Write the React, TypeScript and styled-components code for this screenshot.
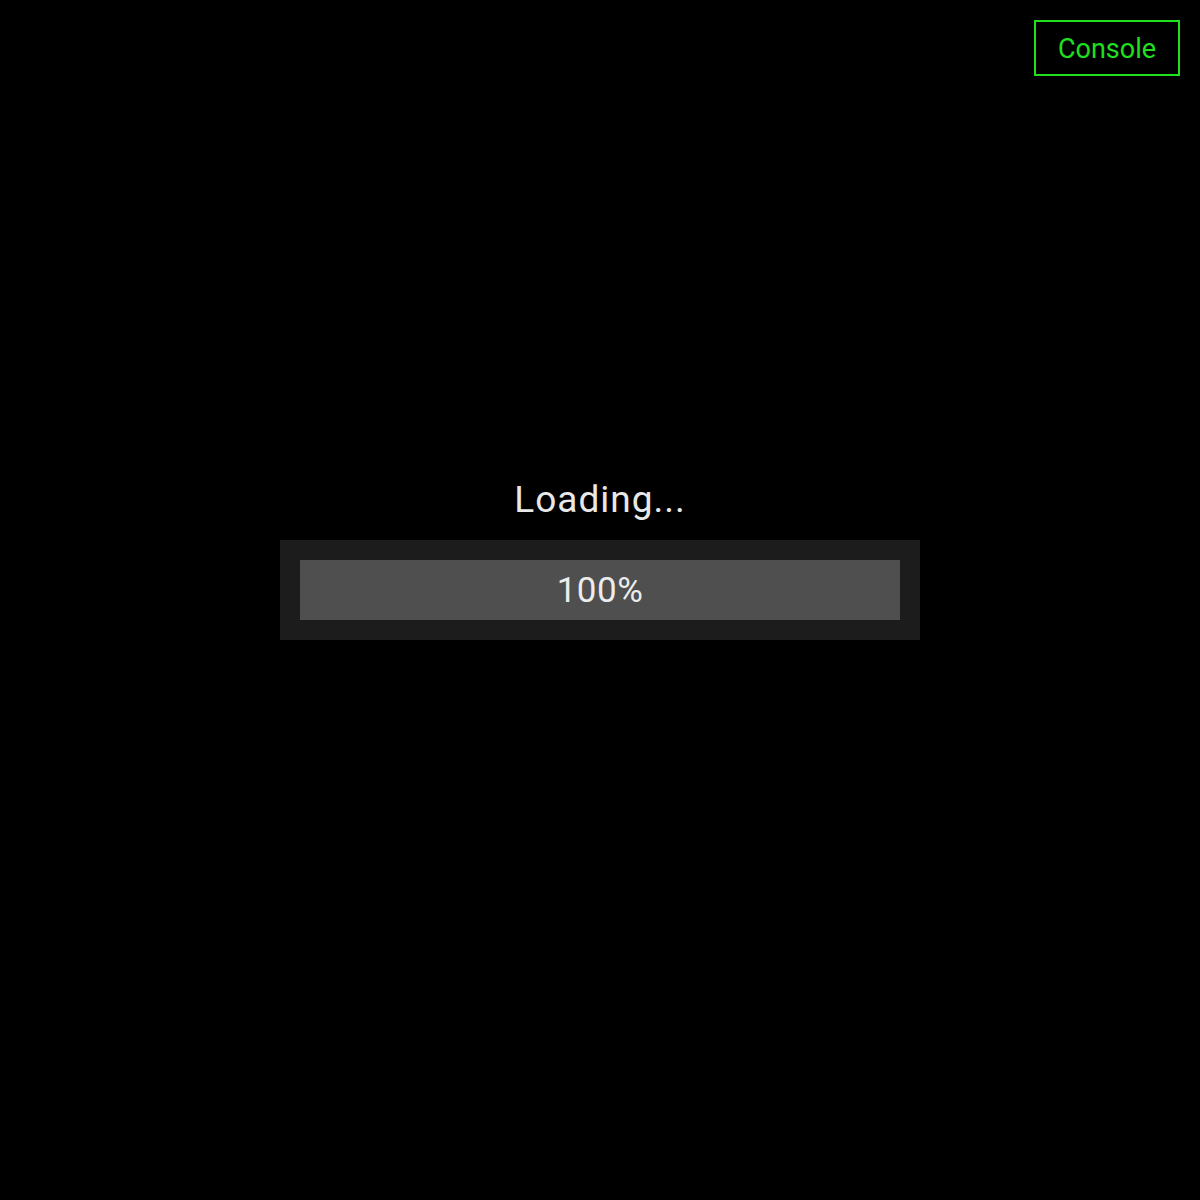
import styled, { createGlobalStyle } from "styled-components";

const GlobalStyle = createGlobalStyle`
  html, body {
    margin: 0;
    padding: 0;
    background: #000;
  }
  body {
    font-family: Roboto, "Liberation Sans", sans-serif;
  }
`;

const Screen = styled.div`
  position: relative;
  width: 1200px;
  height: 1200px;
  background: #000;
  display: flex;
  flex-direction: column;
  align-items: center;
  padding-top: 478px;
  box-sizing: border-box;
`;

const ConsoleButton = styled.button`
  position: absolute;
  top: 20px;
  right: 20px;
  width: 146px;
  height: 56px;
  box-sizing: border-box;
  background: transparent;
  border: 2px solid #1ee01e;
  color: #1ee01e;
  font-family: Roboto, "Liberation Sans", sans-serif;
  font-size: 27px;
  padding: 0;
  padding-top: 2px;
  cursor: pointer;
`;

const Title = styled.div`
  color: #e8e8e8;
  font-size: 37px;
  letter-spacing: 1px;
  line-height: 44px;
  margin-bottom: 18px;
`;

const Track = styled.div`
  width: 640px;
  height: 100px;
  box-sizing: border-box;
  padding: 20px;
  background: #1c1c1c;
`;

const Bar = styled.div`
  height: 60px;
  background: #4f4f4f;
  display: flex;
  align-items: center;
  justify-content: center;
  color: #ececec;
  font-size: 35px;
  letter-spacing: 0.5px;
`;

export default function App() {
  const progress = 100;
  return (
    <>
      <GlobalStyle />
      <Screen>
        <ConsoleButton>Console</ConsoleButton>
        <Title>Loading...</Title>
        <Track>
          <Bar style={{ width: `${progress}%` }}>{progress}%</Bar>
        </Track>
      </Screen>
    </>
  );
}
